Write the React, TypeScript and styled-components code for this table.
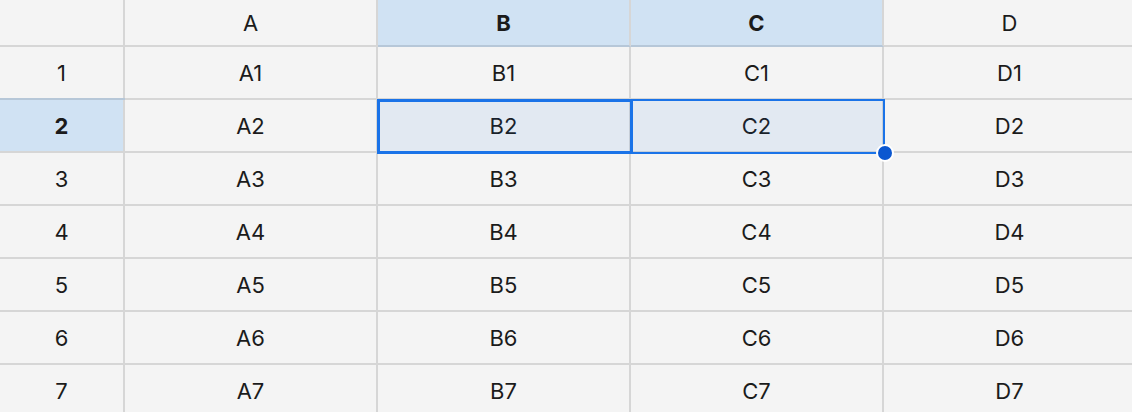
import React from "react";
import styled, { createGlobalStyle } from "styled-components";

const GlobalStyle = createGlobalStyle`
  html, body { margin: 0; padding: 0; background: #f4f4f4; }
  body { font-family: Inter, "Noto Sans", sans-serif; color: #1b1b1b; }
`;

const Viewport = styled.div`
  width: 1132px;
  height: 412px;
  overflow: hidden;
  background: #f4f4f4;
`;

const Sheet = styled.div`
  position: relative;
  display: grid;
  grid-template-columns: 125px repeat(4, 253px);
  grid-template-rows: 47px repeat(8, 53px);
  width: max-content;
`;

const Cell = styled.div<{ $header?: boolean; $selected?: boolean; $rowHead?: boolean }>`
  box-sizing: border-box;
  display: flex;
  align-items: center;
  justify-content: center;
  border-right: 2px solid #d6d6d6;
  border-bottom: 2px solid ${(p) => (p.$header && p.$selected ? "#b6c7d8" : "#d6d6d6")};
  background: ${(p) => (p.$selected ? "#d0e2f3" : "#f4f4f4")};
  font-size: 22px;
  font-weight: ${(p) => (p.$selected ? 700 : 400)};
  box-shadow: ${(p) => (p.$rowHead && p.$selected ? "0 -2px 0 #b6c7d8" : "none")};
`;

const Range = styled.div`
  position: absolute;
  left: 377px;
  top: 99px;
  width: 508px;
  height: 55px;
  box-sizing: border-box;
  border: 2px solid #1a73e8;
  background: rgba(26, 115, 232, 0.08);
  pointer-events: none;
`;

const Active = styled.div`
  position: absolute;
  left: 377px;
  top: 99px;
  width: 256px;
  height: 55px;
  box-sizing: border-box;
  border: 3px solid #1a73e8;
  pointer-events: none;
`;

const Handle = styled.div`
  position: absolute;
  left: 876px;
  top: 144px;
  width: 14px;
  height: 14px;
  box-sizing: content-box;
  border-radius: 50%;
  background: #0b57d0;
  border: 2px solid #ffffff;
`;

const cols = ["A", "B", "C", "D"];
const selCols = ["B", "C"];
const rows = [1, 2, 3, 4, 5, 6, 7, 8];

export default function App() {
  return (
    <Viewport>
      <GlobalStyle />
      <Sheet>
        <Cell $header />
        {cols.map((c) => (
          <Cell key={c} $header $selected={selCols.includes(c)}>
            {c}
          </Cell>
        ))}
        {rows.map((r) => (
          <React.Fragment key={r}>
            <Cell $rowHead $selected={r === 2}>
              {r}
            </Cell>
            {cols.map((c) => (
              <Cell key={c + r}>{`${c}${r}`}</Cell>
            ))}
          </React.Fragment>
        ))}
        <Range />
        <Active />
        <Handle />
      </Sheet>
    </Viewport>
  );
}
